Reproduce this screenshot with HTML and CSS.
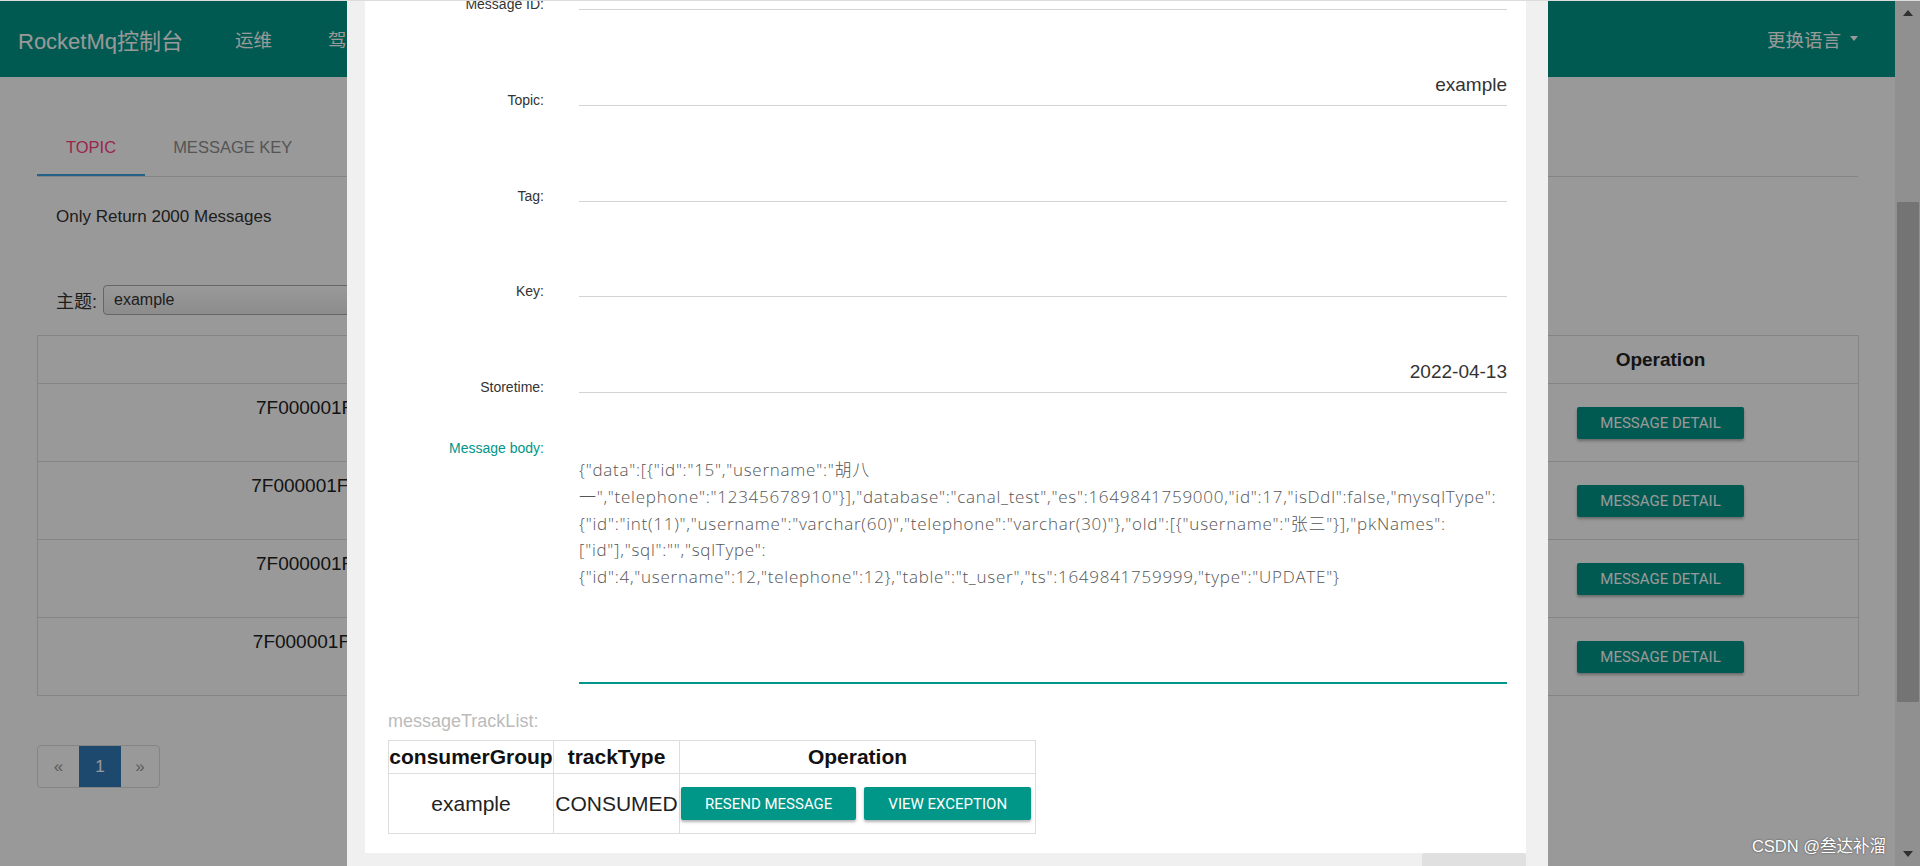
FILE: index.html
```html
<!DOCTYPE html>
<html lang="zh">
<head>
<meta charset="utf-8">
<title>RocketMq控制台</title>
<link rel="stylesheet" href="styles.css">
</head>
<body>
<div class="topline"></div>
<div class="app">
  <div class="page">
    <header class="navbar">
      <div class="brand">RocketMq控制台</div>
      <nav class="nav">
        <span>运维</span><span>驾驶舱</span><span>集群</span><span>主题</span><span>消费者</span><span>生产者</span><span>消息</span><span>消息轨迹</span>
      </nav>
      <div class="nav-right"><span>更换语言</span><span class="caret"></span></div>
    </header>
    <main class="content">
      <div class="tabs">
        <div class="tab active">TOPIC</div>
        <div class="tab">MESSAGE KEY</div>
        <div class="tab">MESSAGE ID</div>
      </div>
      <div class="notice">Only Return 2000 Messages</div>
      <div class="filter">
        <span class="filter-label">主题:</span>
        <div class="select">example</div>
      </div>
      <table class="msg-table">
        <colgroup><col class="c-id"><col class="c-tag"><col class="c-key"><col class="c-time"><col class="c-op"></colgroup>
        <thead>
          <tr><th>Message ID</th><th>Tag</th><th>Key</th><th>StoreTime</th><th>Operation</th></tr>
        </thead>
        <tbody>
          <tr><td class="id">7F000001F5A418B4AAC2863E3A1F0000</td><td></td><td></td><td></td><td class="op"><button class="btn">MESSAGE DETAIL</button></td></tr>
          <tr><td class="id">7F000001F5A418B4AAC2863CDDBD0000</td><td></td><td></td><td></td><td class="op"><button class="btn">MESSAGE DETAIL</button></td></tr>
          <tr><td class="id">7F000001F5A418B4AAC2863A3E1F0000</td><td></td><td></td><td></td><td class="op"><button class="btn">MESSAGE DETAIL</button></td></tr>
          <tr><td class="id">7F000001F5A418B4AAC28638DDBD0000</td><td></td><td></td><td></td><td class="op"><button class="btn">MESSAGE DETAIL</button></td></tr>
        </tbody>
      </table>
      <ul class="pagination">
        <li class="pg">&laquo;</li>
        <li class="pg active">1</li>
        <li class="pg">&raquo;</li>
      </ul>
    </main>
  </div>
  <div class="scrollbar">
    <div class="sb-btn"><span class="tri-up"></span></div>
    <div class="sb-track"><div class="sb-thumb"></div></div>
    <div class="sb-btn"><span class="tri-down"></span></div>
  </div>
</div>

<div class="backdrop"></div>

<div class="dialog">
  <div class="dialog-content">
    <div class="card">
      <div class="form-row"><label class="form-label">Message ID:</label><div class="form-value">7F000001F5A418B4AAC2863E3A1F0000</div></div>
      <div class="form-row"><label class="form-label">Topic:</label><div class="form-value">example</div></div>
      <div class="form-row"><label class="form-label">Tag:</label><div class="form-value"></div></div>
      <div class="form-row"><label class="form-label">Key:</label><div class="form-value"></div></div>
      <div class="form-row"><label class="form-label">Storetime:</label><div class="form-value">2022-04-13</div></div>
      <div class="form-row body-row"><label class="form-label body-label">Message body:</label><div class="body-value">{"data":[{"id":"15","username":"胡八
一","telephone":"12345678910"}],"database":"canal_test","es":1649841759000,"id":17,"isDdl":false,"mysqlType":
{"id":"int(11)","username":"varchar(60)","telephone":"varchar(30)"},"old":[{"username":"张三"}],"pkNames":
["id"],"sql":"","sqlType":
{"id":4,"username":12,"telephone":12},"table":"t_user","ts":1649841759999,"type":"UPDATE"}</div></div>
      <div class="track">
        <div class="track-label">messageTrackList:</div>
        <table class="track-table">
          <colgroup><col class="t-group"><col class="t-type"><col class="t-op"></colgroup>
          <thead><tr><th>consumerGroup</th><th>trackType</th><th>Operation</th></tr></thead>
          <tbody>
            <tr>
              <td>example</td>
              <td>CONSUMED</td>
              <td class="track-op"><button class="btn btn-lg">RESEND MESSAGE</button><button class="btn btn-lg">VIEW EXCEPTION</button></td>
            </tr>
          </tbody>
        </table>
      </div>
    </div>
    <div class="dialog-footer"><button class="close-btn">关闭</button></div>
  </div>
</div>

<div class="watermark">CSDN @叁达补溜</div>
</body>
</html>
```
FILE: styles.css
```css
* { box-sizing: border-box; }
html, body { margin: 0; height: 866px; overflow: hidden; }
body {
  font-family: "Liberation Sans", Arial, "Noto Sans CJK SC", sans-serif;
  color: #333;
  background: #fff;
  position: relative;
}

.topline { position: absolute; top: 0; left: 0; right: 0; height: 1px; background: #dcdcdc; z-index: 30; }

.app { display: flex; height: 866px; }
.page { flex: 1; min-width: 0; }

/* navbar */
.navbar {
  height: 77px;
  background: #009688;
  color: #fff;
  display: flex;
  align-items: center;
  padding: 0 37px 0 18px;
}
.brand { font-size: 22px; margin-right: 52px; }
.nav { display: flex; gap: 56px; font-size: 18.5px; }
.nav-right { margin-left: auto; display: flex; align-items: center; gap: 9px; font-size: 18.5px; }
.caret { width: 0; height: 0; border-left: 4px solid transparent; border-right: 4px solid transparent; border-top: 5px solid #fff; }

/* content */
.content { padding: 41px 37px 0; }
.tabs { display: flex; height: 59px; border-bottom: 1px solid #ddd; }
.tab { display: flex; align-items: center; padding: 0 29px 0 28px; font-size: 16.5px; color: #8e8e8e; }
.tab.active { color: #ff4081; box-shadow: inset 0 -2px 0 #3fa4e6; padding-left: 29px; }

.notice { margin-top: 28px; padding-left: 19px; font-size: 17px; line-height: 24px; color: #333; }

.filter { margin-top: 56px; height: 30px; padding-left: 19px; display: flex; align-items: center; }
.filter-label { font-size: 18px; color: #333; font-family: "Liberation Sans", "Noto Sans CJK SC", sans-serif; }
.select {
  margin-left: 6px;
  width: 480px;
  height: 30px;
  border: 1px solid #aaa;
  border-radius: 4px;
  background: linear-gradient(#fff, #eaeaea);
  font-size: 16px;
  line-height: 28px;
  padding-left: 10px;
  color: #333;
}

.msg-table { margin-top: 20px; width: 100%; border-collapse: collapse; table-layout: fixed; border: 1px solid #ddd; }
.c-id { width: 794px; }
.c-tag { width: 206px; }
.c-key { width: 200px; }
.c-time { width: 225px; }
.c-op { width: 396px; }
.msg-table th { height: 48px; font-size: 19px; font-weight: bold; color: #222; border: 1px solid #ddd; text-align: center; }
.msg-table td { height: 78px; font-size: 19px; color: #222; border: 1px solid #ddd; text-align: center; }
.msg-table td.id { vertical-align: top; padding-top: 13px; }
.msg-table td.op { vertical-align: middle; }

.btn {
  background: #009688;
  color: #fff;
  border: 0;
  border-radius: 2px;
  font-family: Roboto, "Liberation Sans", sans-serif;
  font-size: 15px;
  height: 32px;
  padding: 0 23px;
  box-shadow: 0 2px 3px rgba(0, 0, 0, 0.3);
}

.pagination { list-style: none; margin: 49px 0 0; padding: 0; display: inline-flex; border: 1px solid #ddd; border-radius: 4px; height: 43px; }
.pg { display: flex; align-items: center; justify-content: center; width: 41px; font-size: 17px; color: #999; }
.pg.active { width: 42px; background: #337ab7; color: #fff; }
.pg:last-child { width: 38px; }

/* fake window scrollbar */
.scrollbar { width: 25px; background: #f1f1f1; display: flex; flex-direction: column; }
.sb-btn { height: 25px; display: flex; align-items: center; justify-content: center; }
.tri-up { width: 0; height: 0; border-left: 5.5px solid transparent; border-right: 5.5px solid transparent; border-bottom: 6px solid #505050; margin-left: 1px; }
.tri-down { width: 0; height: 0; border-left: 5.5px solid transparent; border-right: 5.5px solid transparent; border-top: 6px solid #505050; margin-left: 1px; }
.sb-track { flex: 1; padding: 177px 1px 0 2px; }
.sb-thumb { height: 500px; background: #c1c1c1; }

/* modal */
.backdrop { position: absolute; inset: 0; background: rgba(0, 0, 0, 0.4); z-index: 10; }
.dialog { position: absolute; top: -123.75px; left: 0; width: 1895px; display: flex; justify-content: center; z-index: 11; }
.dialog-content { width: 1201px; background: #f0f0f0; padding: 18px 22px 0 18px; }
.card { background: #fff; padding: 20px 19px 19px 0; }

.form-row { display: grid; grid-template-columns: 179px 928px; column-gap: 35px; height: 95.75px; }
.form-label { align-self: end; text-align: right; font-size: 14px; line-height: 20px; margin-bottom: -4px; color: #333; }
.form-value {
  align-self: end;
  height: 36px;
  border-bottom: 1px solid #d3d3d3;
  padding-bottom: 5px;
  text-align: right;
  font-size: 19px;
  line-height: 30px;
  color: #333;
  white-space: nowrap;
  overflow: hidden;
}
.body-row { height: auto; }
.body-label { align-self: start; margin: 45px 0 0; color: #009688; }
.body-value {
  height: 291px;
  padding-top: 64px;
  border-bottom: 2px solid #009688;
  font-family: "Open Sans", "Noto Sans CJK SC", sans-serif;
  font-weight: 300;
  font-size: 17px;
  letter-spacing: 0.74px;
  line-height: 26.75px;
  color: #555;
  white-space: pre-line;
}

.track { padding-left: 23px; }
.track-label { margin-top: 25px; margin-bottom: 7px; font-size: 18px; line-height: 24px; color: #bbb; }
.track-table { border-collapse: collapse; table-layout: fixed; width: 647px; }
.t-group { width: 165px; }
.t-type { width: 126px; }
.t-op { width: 356px; }
.track-table th { height: 33px; padding: 0; font-size: 21px; font-weight: bold; color: #111; border: 1px solid #ddd; text-align: center; white-space: nowrap; }
.track-table td { height: 60px; padding: 0; font-size: 21px; color: #222; border: 1px solid #ddd; text-align: center; white-space: nowrap; }
.track-table td.track-op { text-align: left; padding-left: 1px; }
.btn-lg { height: 33px; padding: 0 24px; margin-right: 8px; vertical-align: middle; }

.dialog-footer { display: flex; justify-content: flex-end; }
.close-btn {
  width: 104px;
  height: 40px;
  border: 0;
  border-radius: 3px;
  background: #e0e0e0;
  color: #555;
  font-size: 17px;
  font-family: "Noto Sans CJK SC", sans-serif;
}

.watermark {
  position: absolute;
  right: 34px;
  top: 835px;
  font-size: 16.5px;
  line-height: 22px;
  color: #fff;
  text-shadow: 0 0 2px rgba(0, 0, 0, 0.6);
  z-index: 20;
  font-family: "Liberation Sans", "Noto Sans CJK SC", sans-serif;
}
```
